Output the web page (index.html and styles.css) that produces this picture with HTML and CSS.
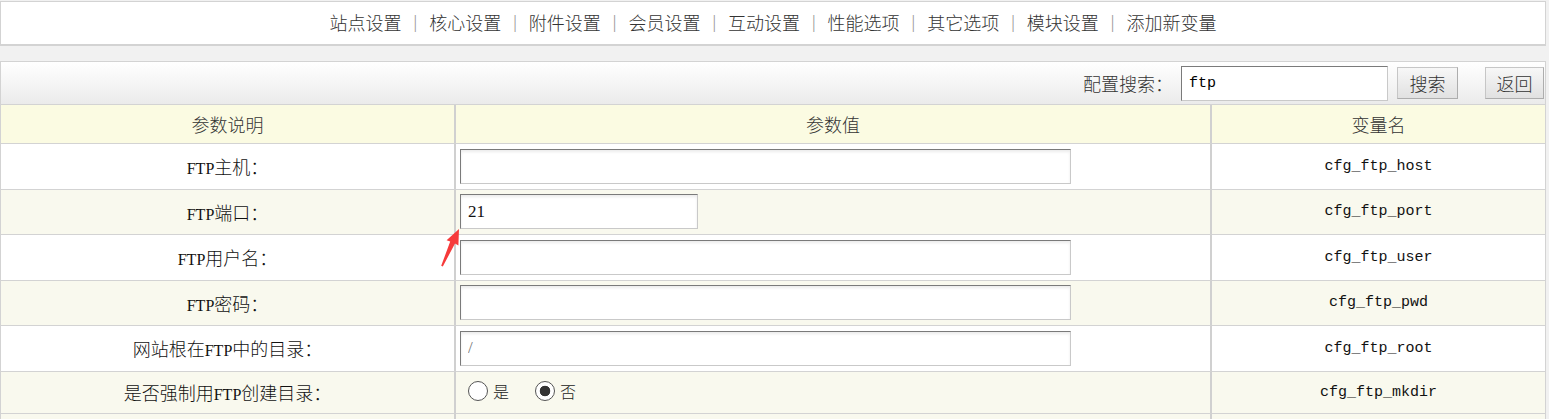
FILE: index.html
```html
<!DOCTYPE html>
<html lang="zh-CN">
<head>
<meta charset="utf-8">
<title>系统配置</title>
<link rel="stylesheet" href="styles.css">
</head>
<body>
<div class="nav">
  <a class="nav-item">站点设置</a><span class="sep">|</span>
  <a class="nav-item">核心设置</a><span class="sep">|</span>
  <a class="nav-item">附件设置</a><span class="sep">|</span>
  <a class="nav-item">会员设置</a><span class="sep">|</span>
  <a class="nav-item">互动设置</a><span class="sep">|</span>
  <a class="nav-item">性能选项</a><span class="sep">|</span>
  <a class="nav-item">其它选项</a><span class="sep">|</span>
  <a class="nav-item">模块设置</a><span class="sep">|</span>
  <a class="nav-item">添加新变量</a>
</div>

<div class="panel">
  <div class="searchbar">
    <span class="search-label">配置搜索：</span>
    <input class="search-input" type="text" value="ftp">
    <button class="btn btn-search" type="button">搜索</button>
    <button class="btn btn-back" type="button">返回</button>
  </div>
  <table class="cfg">
    <colgroup><col class="c1"><col class="c2"><col class="c3"></colgroup>
    <thead>
      <tr><th>参数说明</th><th>参数值</th><th>变量名</th></tr>
    </thead>
    <tbody>
      <tr class="row">
        <td class="label"><span class="en">FTP</span>主机：</td>
        <td class="val"><input class="txt long" type="text" value=""></td>
        <td class="var">cfg_ftp_host</td>
      </tr>
      <tr class="row alt">
        <td class="label"><span class="en">FTP</span>端口：</td>
        <td class="val"><input class="txt short" type="text" value="21"></td>
        <td class="var">cfg_ftp_port</td>
      </tr>
      <tr class="row">
        <td class="label"><span class="en">FTP</span>用户名：</td>
        <td class="val"><input class="txt long" type="text" value=""></td>
        <td class="var">cfg_ftp_user</td>
      </tr>
      <tr class="row alt">
        <td class="label"><span class="en">FTP</span>密码：</td>
        <td class="val"><input class="txt long" type="text" value=""></td>
        <td class="var">cfg_ftp_pwd</td>
      </tr>
      <tr class="row">
        <td class="label">网站根在<span class="en">FTP</span>中的目录：</td>
        <td class="val"><input class="txt long light" type="text" value="/"></td>
        <td class="var">cfg_ftp_root</td>
      </tr>
      <tr class="row alt radio-row">
        <td class="label">是否强制用<span class="en">FTP</span>创建目录：</td>
        <td class="val">
          <label class="opt"><input class="radio" type="radio" name="mkdir">是</label>
          <label class="opt"><input class="radio" type="radio" name="mkdir" checked>否</label>
        </td>
        <td class="var">cfg_ftp_mkdir</td>
      </tr>
      <tr class="row foot">
        <td class="label"></td><td class="val"></td><td class="var"></td>
      </tr>
    </tbody>
  </table>
</div>

<svg class="arrow" viewBox="436 224 28 48" width="28" height="48" aria-hidden="true">
  <polygon points="459,229 446.6,240.2 450.2,241.6 441.2,265.8 442.8,266.4 455,243.6 458.4,245.4" fill="#f63a3a"/>
</svg>
</body>
</html>
```

FILE: styles.css
```css
* { box-sizing: border-box; }

body {
  margin: 0;
  padding-top: 1px;
  background: #f1f1f1;
  font-family: "Liberation Serif", "Noto Sans CJK SC", serif;
  color: #111;
  position: relative;
}

/* top navigation */
.nav {
  margin-right: 3px;
  height: 45px;
  padding-bottom: 2px;
  background: #fff;
  border: 1px solid #d3d3d3;
  border-bottom-width: 2px;
  display: flex;
  justify-content: center;
  align-items: center;
  font-family: "Noto Sans CJK SC", sans-serif;
  font-weight: 300;
  font-size: 18px;
  line-height: 20px;
  color: #333;
}
.nav-item { color: #333; }
.sep {
  font-family: "Liberation Serif", serif;
  color: #999;
  padding: 0 12px;
}

/* panel */
.panel {
  margin: 15px 3px 0 0;
  border: 1px solid #d3d3d3;
  border-bottom: 0;
  background: #fff;
}

.searchbar {
  height: 43px;
  display: flex;
  justify-content: flex-end;
  align-items: center;
  padding-right: 1px;
  background: linear-gradient(#ffffff, #ebebeb);
  border-bottom: 1px solid #d3d3d3;
}
.search-label {
  font-family: "Noto Sans CJK SC", sans-serif;
  font-weight: 300;
  font-size: 18px;
  line-height: 20px;
  color: #333;
  margin-right: 8px;
}
.search-input {
  width: 207px;
  height: 35px;
  margin: 0 9px 0 0;
  padding: 0 0 0 7px;
  border: 1px solid;
  border-color: #7a7a7a #c9c9c9 #c9c9c9 #7a7a7a;
  background: #fff;
  font-family: "Liberation Mono", monospace;
  font-size: 15px;
  color: #000;
}
.btn {
  height: 32px;
  padding: 0;
  border: 1px solid #c6c6c6;
  border-right-color: #adadad;
  border-bottom-color: #adadad;
  background: linear-gradient(#f7f7f7, #e1e1e1);
  font-family: "Noto Sans CJK SC", sans-serif;
  font-weight: 300;
  font-size: 18px;
  color: #333;
}
.btn-search { width: 61px; }
.btn-back { width: 59px; margin-left: 27px; }

/* table */
.cfg {
  width: 100%;
  border-collapse: separate;
  border-spacing: 0;
  table-layout: fixed;
}
.c1 { width: 455px; }
.c3 { width: 333px; }

.cfg th,
.cfg td {
  padding: 0;
  border-right: 2px solid #d0d0d0;
  border-bottom: 1px solid #d3d3d3;
  text-align: center;
  vertical-align: middle;
}
.cfg th:last-child,
.cfg td:last-child { border-right: 0; }

.cfg th {
  height: 39px;
  background: #fbfbe2;
  font-family: "Noto Sans CJK SC", sans-serif;
  font-weight: 300;
  font-size: 18px;
  color: #333;
}

.row td { height: 45.5px; }
.row.alt td { background: #f9f9ee; }
.radio-row td { height: 42px; }
.foot td { height: 40px; background: #f9f9ee; }

.label {
  font-family: "Noto Sans CJK SC", sans-serif;
  font-weight: 300;
  font-size: 18px;
  color: #111;
}
.en {
  font-family: "Liberation Serif", serif;
  font-weight: 400;
  font-size: 16px;
}

.cfg td.val {
  text-align: left;
  padding-left: 4px;
}
.var {
  font-family: "Liberation Mono", monospace;
  font-size: 15px;
  color: #111;
}

.txt {
  display: block;
  height: 35px;
  padding: 0 0 0 7px;
  border: 1px solid;
  border-color: #7a7a7a #c9c9c9 #c9c9c9 #7a7a7a;
  background: #fff;
  box-shadow: inset 0 2px 3px rgba(0, 0, 0, 0.08);
  font-family: "Liberation Serif", serif;
  font-size: 17px;
  color: #111;
}
.txt.long { width: 611px; }
.txt.short { width: 238px; }
.txt.light { color: #777; }

.opt {
  display: inline-flex;
  align-items: center;
  margin-left: 8px;
  font-family: "Noto Sans CJK SC", sans-serif;
  font-weight: 300;
  font-size: 16px;
  color: #222;
  margin-right: 14px;
}
.radio {
  appearance: none;
  -webkit-appearance: none;
  width: 20px;
  height: 20px;
  margin: 0 5px 0 0;
  border: 1.5px solid #555;
  border-radius: 50%;
  background: #fff;
}
.radio:checked {
  background: radial-gradient(circle, #333 0 5px, #fff 5.6px);
}

.arrow {
  position: absolute;
  left: 436px;
  top: 224px;
}
```
